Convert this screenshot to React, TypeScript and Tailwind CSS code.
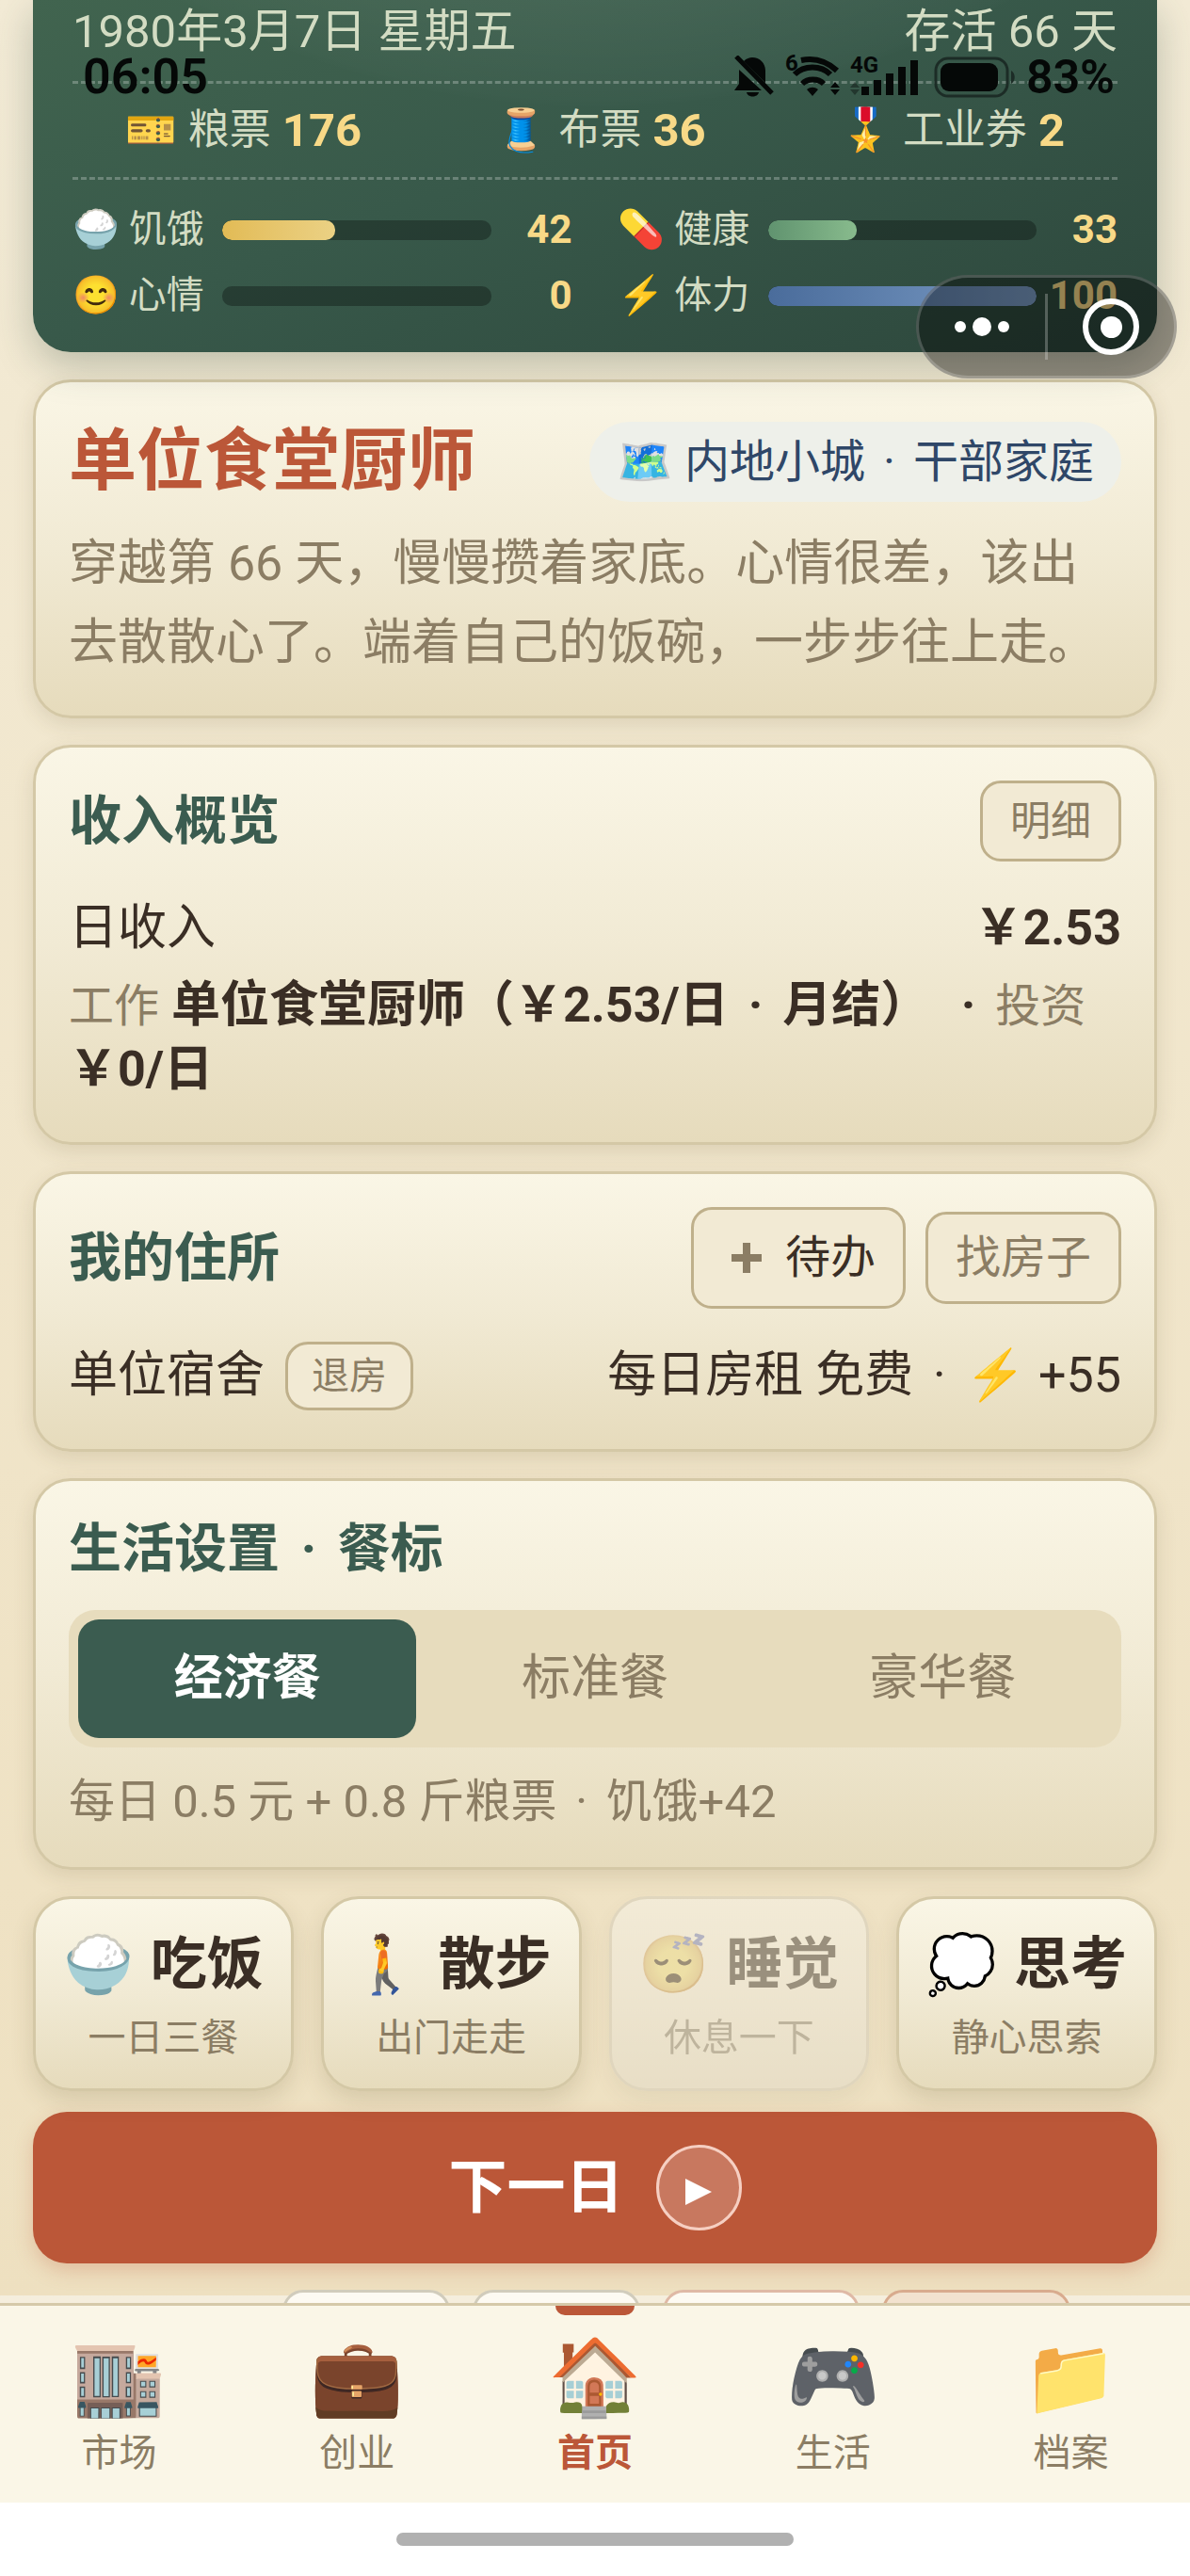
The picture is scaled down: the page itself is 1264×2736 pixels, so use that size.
import type { ReactNode } from "react";

type Meter = { icon: string; label: string; value: number; fill: string };

const tickets = [
  { icon: "🎫", label: "粮票", count: 176 },
  { icon: "🧵", label: "布票", count: 36 },
  { icon: "🎖️", label: "工业券", count: 2 },
];

const meters: Meter[] = [
  { icon: "🍚", label: "饥饿", value: 42, fill: "from-[#e2bb55] to-[#ebd184]" },
  { icon: "💊", label: "健康", value: 33, fill: "from-[#60936f] to-[#88bb8d]" },
  { icon: "😊", label: "心情", value: 0, fill: "from-[#e2bb55] to-[#ebd184]" },
  { icon: "⚡", label: "体力", value: 100, fill: "from-[#4a6c9b] to-[#7b9cc5]" },
];

const meals = ["经济餐", "标准餐", "豪华餐"];

const actions = [
  { icon: "🍚", label: "吃饭", hint: "一日三餐", disabled: false },
  { icon: "🚶", label: "散步", hint: "出门走走", disabled: false },
  { icon: "😴", label: "睡觉", hint: "休息一下", disabled: true },
  { icon: "💭", label: "思考", hint: "静心思索", disabled: false },
];

const tabs = [
  { icon: "🏬", label: "市场" },
  { icon: "💼", label: "创业" },
  { icon: "🏠", label: "首页" },
  { icon: "🎮", label: "生活" },
  { icon: "📁", label: "档案" },
];

function Emoji({ children }: { children: ReactNode }) {
  return <span className="font-['Noto_Color_Emoji',sans-serif] font-normal">{children}</span>;
}

function Dot() {
  return <span className="mx-[0.4em]">·</span>;
}

function Card({ children }: { children: ReactNode }) {
  return (
    <section className="rounded-[40px] border-[3px] border-[#d4c8a6] bg-linear-to-b from-[#faf6e6] via-[#f1ead4] to-[#e6dbbc] p-[35px] shadow-[0_7px_21px_rgba(90,75,40,0.14)]">
      {children}
    </section>
  );
}

function CardTitle({ children }: { children: ReactNode }) {
  return <h2 className="text-[56px] leading-[74px] font-bold text-[#3b5c50]">{children}</h2>;
}

function MeterRow({ meter }: { meter: Meter }) {
  return (
    <div className="flex h-[50px] items-center">
      <span className="w-[159px] text-[40px] leading-[50px] whitespace-nowrap">
        <Emoji>{meter.icon}</Emoji> {meter.label}
      </span>
      <div className="h-[21px] flex-1 overflow-hidden rounded-[10px] bg-black/30">
        <div className={`h-full rounded-[10px] bg-linear-to-r ${meter.fill}`} style={{ width: `${meter.value}%` }} />
      </div>
      <b className="w-[86px] text-right text-[42px] leading-[50px] text-[#f8d987]">{meter.value}</b>
    </div>
  );
}

function StatusBar() {
  return (
    <div className="absolute inset-x-0 top-[55px] z-20 flex h-[54px] items-center justify-between pr-[80px] pl-[88px] text-[52px] leading-[54px] font-semibold text-[#050807]">
      <span>06:05</span>
      <div className="flex items-center gap-[10px]">
        <svg className="h-[46px] w-[44px]" viewBox="0 0 44 46" fill="currentColor">
          <path d="M11 6c3-3 6-4 9-4 8 0 14 6 14 14v13zM6 15l24 22H1l5-7zM14 39h13c-1 6-12 6-13 0z" />
          <path d="M3 1l38 39" stroke="currentColor" strokeWidth="5" />
        </svg>
        <svg className="h-[50px] w-[60px] overflow-visible" viewBox="0 0 60 50">
          <g fill="none" stroke="currentColor" strokeWidth="6">
            <path d="M18 7c14-3 27 1 38 11" />
            <path d="M11 22c10-10 28-10 38 0" />
            <path d="M19 32c6-6 17-6 23 0" />
          </g>
          <path d="M24 38c4-3 8-3 12 0l-6 7zM49 36l5-6 5 6zM49 38l5 6 5-6z" fill="currentColor" />
          <text x="1" y="18" fontSize="24" fontWeight="700" fill="currentColor">6</text>
        </svg>
        <svg className="h-[50px] w-[72px] overflow-visible" viewBox="0 0 72 50" fill="currentColor">
          <path d="M12 35h8v9h-8zM25 28h8v16h-8zM38 21h8v23h-8zM51 14h8v30h-8zM64 7h8v37h-8z" />
          <path d="M0 36l5-6 5 6zM0 38l5 6 5-6z" opacity="0.4" />
          <text x="0" y="20" fontSize="24" fontWeight="700">4G</text>
        </svg>
        <svg className="ml-[7px] h-[44px] w-[88px]" viewBox="0 0 88 44" fill="none">
          <rect x="2" y="2" width="76" height="40" rx="13" stroke="#1c2c26" strokeWidth="3" />
          <rect x="7" y="7" width="61" height="30" rx="9" fill="currentColor" />
          <path d="M82 15c5 3 5 11 0 14z" fill="#1c2c26" />
        </svg>
        <span className="text-[50px]">83%</span>
      </div>
    </div>
  );
}

function Capsule() {
  return (
    <div className="absolute top-[292px] right-[14px] z-20 flex h-[110px] w-[277px] items-center rounded-full border-[3px] border-white/20 bg-black/40">
      <button className="flex h-full flex-1 items-center justify-center gap-[7px]" aria-label="更多">
        <span className="size-[12px] rounded-full bg-white" />
        <span className="size-[20px] rounded-full bg-white" />
        <span className="size-[12px] rounded-full bg-white" />
      </button>
      <span className="h-[70px] w-[3px] bg-white/25" />
      <button className="flex h-full flex-1 items-center justify-center" aria-label="关闭">
        <span className="flex size-[60px] items-center justify-center rounded-full border-[6px] border-white">
          <span className="size-[23px] rounded-full bg-white" />
        </span>
      </button>
    </div>
  );
}

function ResourcePanel() {
  return (
    <header className="relative z-10 rounded-b-[40px] bg-[radial-gradient(circle_919px_at_50%_-804px,rgba(255,255,255,0.05)_0%,rgba(255,255,255,0.05)_87%,rgba(255,255,255,0.01)_99%,transparent_100%),linear-gradient(160deg,#41644f_0%,#38594a_45%,#2d473c_100%)] px-[42px] pb-[35px] text-[#d3dcc3] shadow-[0_14px_42px_rgba(45,71,60,0.28)]">
      <div className="flex justify-between pb-[18px] text-[49px] leading-[68px]">
        <span>1980年3月7日 星期五</span>
        <span>存活 66 天</span>
      </div>
      <div className="flex justify-between border-y-[3px] border-dashed border-white/25 px-[56px] py-[15px]">
        {tickets.map((ticket) => (
          <div key={ticket.label} className="flex items-center gap-[12px] text-[44px] leading-[69px]">
            <Emoji>{ticket.icon}</Emoji>
            <span>{ticket.label}</span>
            <b className="text-[49px] text-[#f8d987]">{ticket.count}</b>
          </div>
        ))}
      </div>
      <div className="grid grid-cols-2 gap-x-[49px] gap-y-[20px] pt-[28px]">
        {meters.map((meter) => (
          <MeterRow key={meter.label} meter={meter} />
        ))}
      </div>
    </header>
  );
}

export default function App() {
  return (
    <div className="relative bg-white font-[Roboto,'Noto_Sans_CJK_SC',sans-serif] text-[#3a2e25]">
      <StatusBar />
      <Capsule />

      <main className="bg-linear-to-b from-[#f3ebd6] to-[#eee0c0] px-[35px]">
        <ResourcePanel />

        <div className="flex flex-col gap-[28px] pt-[29px]">
          <Card>
            <div className="mb-[18px] flex items-center justify-between">
              <h1 className="text-[72px] leading-[98px] font-bold text-[#bb5738]">单位食堂厨师</h1>
              <span className="rounded-full bg-[#eef0ea] px-[29px] text-[48px] leading-[85px] text-[#2f4768]">
                <Emoji>🗺️</Emoji> 内地小城
                <Dot />
                干部家庭
              </span>
            </div>
            <p className="text-[52px] leading-[84px] text-[#8b7d64]">
              穿越第 66 天，慢慢攒着家底。心情很差，该出去散散心了。端着自己的饭碗，一步步往上走。
            </p>
          </Card>

          <Card>
            <div className="flex items-center justify-between">
              <CardTitle>收入概览</CardTitle>
              <button className="rounded-[22px] border-[3px] border-[#bfb08b] bg-[#f2ead4] px-[29px] text-[43px] leading-[80px] text-[#8b7d64]">
                明细
              </button>
            </div>
            <div className="mt-[28px] flex items-center justify-between text-[52px] leading-[86px]">
              <span>日收入</span>
              <b>￥2.53</b>
            </div>
            <p className="pt-[5px] pb-[9px] text-[52px] leading-[67px] font-bold">
              <span className="text-[48px] font-normal text-[#8b7d64]">工作</span> 单位食堂厨师（￥2.53/日
              <Dot />
              月结） <Dot />
              <span className="text-[48px] font-normal text-[#8b7d64]">投资</span>{" "}
              <span className="whitespace-nowrap">￥0/日</span>
            </p>
          </Card>

          <Card>
            <div className="flex items-center justify-between">
              <CardTitle>我的住所</CardTitle>
              <div className="flex items-center gap-[21px]">
                <button className="flex items-center gap-[24px] rounded-[22px] border-[3px] border-[#bfb08b] bg-[#f2ead4] pr-[29px] pl-[39px] text-[48px] leading-[102px]">
                  <svg className="size-[34px]" viewBox="0 0 34 34" fill="none" stroke="#8b7d64" strokeWidth="8">
                    <path d="M17 1v32M1 17h32" />
                  </svg>
                  待办
                </button>
                <button className="rounded-[22px] border-[3px] border-[#bfb08b] bg-[#f2ead4] px-[29px] text-[48px] leading-[92px] text-[#8b7d64]">
                  找房子
                </button>
              </div>
            </div>
            <div className="mt-[28px] flex items-center justify-between text-[52px] leading-[86px]">
              <span className="flex items-center gap-[22px]">
                单位宿舍
                <button className="rounded-[24px] border-[3px] border-[#bfb08b] bg-[#f2ead4] px-[25px] text-[40px] leading-[67px] text-[#8b7d64]">
                  退房
                </button>
              </span>
              <span>
                每日房租 免费
                <Dot />
                <Emoji>⚡</Emoji> +55
              </span>
            </div>
          </Card>

          <Card>
            <CardTitle>
              生活设置
              <Dot />
              餐标
            </CardTitle>
            <div className="mt-[28px] grid grid-cols-3 gap-[10px] rounded-[28px] bg-[#e7dcbd] p-[10px]">
              {meals.map((meal, i) => (
                <button
                  key={meal}
                  className={
                    i === 0
                      ? "rounded-[22px] bg-[#3b5c50] text-[52px] leading-[126px] font-bold text-white"
                      : "rounded-[22px] text-[52px] leading-[126px] text-[#8b7d64]"
                  }
                >
                  {meal}
                </button>
              ))}
            </div>
            <p className="mt-[24px] text-[49px] leading-[68px] text-[#8b7d64]">
              每日 0.5 元 + 0.8 斤粮票
              <Dot />
              饥饿+42
            </p>
          </Card>

          <div className="grid grid-cols-4 gap-[29px]">
            {actions.map((action) => (
              <button
                key={action.label}
                disabled={action.disabled}
                className="rounded-[40px] border-[3px] border-[#d4c8a6] bg-linear-to-b from-[#faf6e6] via-[#f1ead4] to-[#e6dbbc] pt-[28px] pb-[25px] whitespace-nowrap shadow-[0_10px_24px_rgba(90,75,40,0.16)] disabled:opacity-45 disabled:grayscale-50"
              >
                <span className="flex items-center justify-center gap-[18px] text-[60px] leading-[84px] font-bold">
                  <Emoji>{action.icon}</Emoji>
                  {action.label}
                </span>
                <span className="mt-[8px] block text-[40px] leading-[56px] text-[#8b7d64]">{action.hint}</span>
              </button>
            ))}
          </div>
        </div>

        <button className="mt-[22px] flex h-[161px] w-full items-center justify-center gap-[34px] rounded-[36px] bg-[#bb5738] text-[62px] font-bold text-white shadow-[0_8px_20px_rgba(187,87,56,0.25)]">
          下一日
          <span className="flex size-[91px] items-center justify-center rounded-full border-[3px] border-[#f6cfc2] bg-white/20">
            <svg className="mt-[8px] h-[28px] w-[28px]" viewBox="0 0 28 28" fill="currentColor">
              <path d="M0 0l28 14L0 28z" />
            </svg>
          </span>
        </button>

        <div className="-mx-[35px] mt-[28px] flex h-[14px] gap-[24px] overflow-hidden bg-linear-to-b from-transparent from-45% to-[#f5eedd] to-45% pl-[300px]">
          <span className="h-[60px] w-[178px] shrink-0 rounded-[22px] border-[3px] border-[#d1ccbc] bg-[#fdfaf2]" />
          <span className="h-[60px] w-[178px] shrink-0 rounded-[22px] border-[3px] border-[#d1ccbc] bg-[#fdfaf2]" />
          <span className="h-[60px] w-[209px] shrink-0 rounded-[22px] border-[3px] border-[#dfb9a6] bg-[#fdfaf2]" />
          <span className="h-[60px] w-[200px] shrink-0 rounded-[22px] border-[3px] border-[#d8ab8e] bg-[#f2e2cf]" />
        </div>
      </main>

      <nav className="grid grid-cols-5 border-t-[3px] border-[#d5c9a9] bg-[#faf6e7]">
        {tabs.map((tab) => {
          const active = tab.label === "首页";
          return (
            <a
              key={tab.label}
              href="#"
              className={
                active
                  ? "relative flex flex-col items-center gap-[4px] pt-[27px] pb-[24px] font-bold text-[#bb5738]"
                  : "relative flex flex-col items-center gap-[4px] pt-[27px] pb-[24px] text-[#8b7d64]"
              }
            >
              {active && <span className="absolute top-0 h-[10px] w-[84px] rounded-b-[10px] bg-[#bb5738]" />}
              <span className="text-[80px] leading-[98px]">
                <Emoji>{tab.icon}</Emoji>
              </span>
              <span className="text-[40px] leading-[56px]">{tab.label}</span>
            </a>
          );
        })}
      </nav>

      <footer className="flex h-[78px] justify-center bg-white pt-[32px]">
        <span className="h-[14px] w-[422px] rounded-full bg-[#b1b1b1]" />
      </footer>
    </div>
  );
}
